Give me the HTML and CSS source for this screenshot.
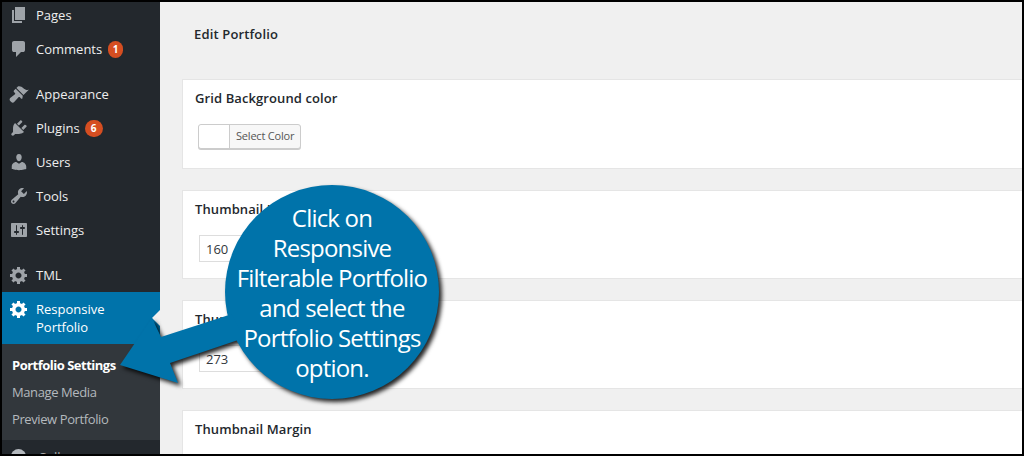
FILE: index.html
```html
<!DOCTYPE html>
<html lang="en">
<head>
<meta charset="utf-8">
<title>Edit Portfolio</title>
<link rel="stylesheet" href="styles.css">
</head>
<body>
<div class="frame">
  <nav class="sidebar">
    <ul class="menu first">
      <li class="item"><svg class="ico" viewBox="0 0 20 20"><path d="M6 15V2h10v13H6zm-1 1h8v2H3V5h2v11z"/></svg><span>Pages</span></li>
      <li class="item"><svg class="ico" viewBox="0 0 20 20"><path d="M5 2h9q.82 0 1.41.59T16 4v7q0 .82-.59 1.41T14 13h-2l-5 5v-5H5q-.82 0-1.41-.59T3 11V4q0-.82.59-1.41T5 2z"/></svg><span>Comments</span><b class="badge">1</b></li>
    </ul>
    <ul class="menu">
      <li class="item"><svg class="ico" viewBox="0 0 20 20"><path d="M14.48 11.06L7.41 3.99l1.5-1.5c.5-.56 2.3-.47 3.51.32 1.21.8 1.43 1.28 2.91 2.1 1.18.64 2.45 1.26 4.45.85zm-.71.71L6.7 4.7 4.93 6.47c-.39.39-.39 1.02 0 1.41l1.06 1.06c.39.39.39 1.03 0 1.42L1.2 14.1c-.8.8-.8 2.1 0 2.9l1.1 1.1c.8.8 2.1.8 2.9 0l4.3-4.75c.39-.39 1.02-.39 1.41 0l1.06 1.06c.39.39 1.02.39 1.41 0z"/></svg><span>Appearance</span></li>
      <li class="item"><svg class="ico" viewBox="0 0 20 20"><path d="M13.11 4.36L9.87 7.6 8 5.73l3.24-3.24c.35-.34 1.05-.2 1.56.32.52.51.66 1.21.31 1.55zm-8 1.77l.91-1.12 9.01 9.01-1.19.84c-.71.71-2.63 1.16-3.82 1.16H6.14L4.9 17.26c-.59.59-1.54.59-2.12 0-.59-.58-.59-1.53 0-2.12l1.24-1.24v-3.88c0-1.13.4-3.19 1.09-3.89zm7.26 3.97l3.24-3.24c.34-.35 1.04-.21 1.55.31.52.51.66 1.21.31 1.55l-3.24 3.25z"/></svg><span>Plugins</span><b class="badge wide">6</b></li>
      <li class="item"><svg class="ico" viewBox="0 0 20 20"><path d="M10 9.25c-2.27 0-2.73-3.44-2.73-3.44C7 4.02 7.82 2 9.97 2c2.16 0 2.98 2.02 2.71 3.81 0 0-.41 3.44-2.68 3.44zm0 2.57L12.72 10c2.39 0 4.52 2.33 4.52 4.53v2.49s-3.65 1.13-7.24 1.13c-3.65 0-7.24-1.13-7.24-1.13v-2.49c0-2.25 1.94-4.48 4.47-4.48z"/></svg><span>Users</span></li>
      <li class="item"><svg class="ico" viewBox="0 0 20 20"><path d="M16.68 9.77c-1.34 1.34-3.3 1.67-4.95.99l-5.41 6.52c-.99.99-2.59.99-3.58 0s-.99-2.59 0-3.57l6.52-5.42c-.68-1.65-.35-3.61.99-4.95 1.28-1.28 3.12-1.62 4.72-1.06l-2.89 2.89 2.82 2.82 2.86-2.87c.53 1.58.18 3.39-1.08 4.65zM3.81 16.21c.4.39 1.04.39 1.43 0 .4-.4.4-1.04 0-1.43-.39-.4-1.03-.4-1.43 0-.39.39-.39 1.03 0 1.43z"/></svg><span>Tools</span></li>
      <li class="item"><svg class="ico" viewBox="0 0 20 20"><path d="M18 16V4c0-.55-.45-1-1-1H3c-.55 0-1 .45-1 1v12c0 .55.45 1 1 1h14c.55 0 1-.45 1-1zM8 11h1c.55 0 1 .45 1 1s-.45 1-1 1H8v1.5c0 .28-.22.5-.5.5s-.5-.22-.5-.5V13H6c-.55 0-1-.45-1-1s.45-1 1-1h1V5.5c0-.28.22-.5.5-.5s.5.22.5.5V11zm5-2h-1c-.55 0-1-.45-1-1s.45-1 1-1h1V5.5c0-.28.22-.5.5-.5s.5.22.5.5V7h1c.55 0 1 .45 1 1s-.45 1-1 1h-1v5.5c0 .28-.22.5-.5.5s-.5-.22-.5-.5V9z"/></svg><span>Settings</span></li>
    </ul>
    <ul class="menu">
      <li class="item"><svg class="ico" viewBox="0 0 20 20"><path d="M18 12h-2.18c-.17.7-.44 1.35-.81 1.93l1.54 1.54-2.1 2.1-1.54-1.54c-.58.36-1.23.63-1.91.79V19H8v-2.18c-.68-.16-1.33-.43-1.91-.79l-1.54 1.54-2.12-2.12 1.54-1.54c-.36-.58-.63-1.23-.79-1.91H1V9.03h2.17c.16-.7.44-1.35.8-1.94L2.43 5.55l2.1-2.1 1.54 1.54c.58-.37 1.24-.64 1.93-.81V2h3v2.18c.68.16 1.33.43 1.91.79l1.54-1.54 2.12 2.12-1.54 1.54c.36.59.64 1.24.8 1.94H18V12zm-8.5 1.5c1.66 0 3-1.34 3-3s-1.34-3-3-3-3 1.34-3 3 1.34 3 3 3z"/></svg><span>TML</span></li>
      <li class="item current"><svg class="ico" viewBox="0 0 20 20"><path d="M18 12h-2.18c-.17.7-.44 1.35-.81 1.93l1.54 1.54-2.1 2.1-1.54-1.54c-.58.36-1.23.63-1.91.79V19H8v-2.18c-.68-.16-1.33-.43-1.91-.79l-1.54 1.54-2.12-2.12 1.54-1.54c-.36-.58-.63-1.23-.79-1.91H1V9.03h2.17c.16-.7.44-1.35.8-1.94L2.43 5.55l2.1-2.1 1.54 1.54c.58-.37 1.24-.64 1.93-.81V2h3v2.18c.68.16 1.33.43 1.91.79l1.54-1.54 2.12 2.12-1.54 1.54c.36.59.64 1.24.8 1.94H18V12zm-8.5 1.5c1.66 0 3-1.34 3-3s-1.34-3-3-3-3 1.34-3 3 1.34 3 3 3z"/></svg><span>Responsive<br>Portfolio</span></li>
    </ul>
    <ul class="submenu">
      <li class="subitem active">Portfolio Settings</li>
      <li class="subitem">Manage Media</li>
      <li class="subitem">Preview Portfolio</li>
    </ul>
    <div class="item collapse"><i class="collapse-dot"></i><span>Collapse</span></div>
  </nav>
  <main class="content">
    <h1 class="page-title">Edit Portfolio</h1>
    <section class="card card-tall">
      <h2 class="card-title">Grid Background color</h2>
      <div class="picker"><i class="swatch"></i><span class="picker-label">Select Color</span></div>
    </section>
    <section class="card">
      <h2 class="card-title">Thumbnail Height</h2>
      <input class="field" type="text" value="160" readonly>
    </section>
    <section class="card">
      <h2 class="card-title">Thumbnail Width</h2>
      <input class="field" type="text" value="273" readonly>
    </section>
    <section class="card">
      <h2 class="card-title">Thumbnail Margin</h2>
    </section>
  </main>
  <svg class="callout-shape" viewBox="2 2 1020 452">
    <g class="callout-fill">
      <circle cx="332" cy="292" r="107"/>
      <polygon points="120,365 152,318 161,337 232,314 244,338 170,363 178,383"/>
    </g>
  </svg>
  <p class="callout-text">Click on<br>Responsive<br>Filterable Portfolio<br>and select the<br>Portfolio Settings<br>option.</p>
</div>
</body>
</html>
```
FILE: styles.css
```css
* { box-sizing: border-box; }
html, body { margin: 0; padding: 0; background: #000; }
.frame {
  position: relative;
  display: flex;
  width: 1024px;
  height: 456px;
  border: 2px solid #000;
  overflow: hidden;
  font-family: "Open Sans", "Liberation Sans", sans-serif;
  font-size: 13px;
}
.sidebar { flex: none; width: 158px; background: #23282d; color: #eee; }
.menu { list-style: none; margin: 0 0 11px; padding: 0; }
.menu:nth-child(3) { margin-bottom: 0; }
.menu.first { margin-top: -4px; }
.item {
  position: relative;
  display: flex;
  align-items: center;
  height: 34px;
  padding-left: 7px;
  line-height: 18px;
}
.ico { flex: none; width: 20px; height: 20px; margin-right: 7px; fill: #9ea3a8; }
.badge {
  display: block;
  width: 15px;
  height: 17px;
  margin-left: 6px;
  border-radius: 9px;
  background: #d54e21;
  color: #fff;
  font-size: 10px;
  font-weight: 700;
  line-height: 17px;
  text-align: center;
}
.badge.wide { width: 18px; margin-left: 5px; }
.current { height: 52px; align-items: flex-start; padding-top: 8px; background: #0073aa; color: #fff; }
.current .ico { fill: #fff; margin-top: -1px; }
.current::after {
  content: "";
  position: absolute;
  right: 0;
  top: 18px;
  border: 8px solid transparent;
  border-right-color: #f1f1f1;
}
.submenu {
  list-style: none;
  margin: 0;
  padding: 8px 0 7px 10px;
  background: #32373c;
  color: #b4b9be;
  letter-spacing: -0.4px;
}
.subitem { height: 27px; line-height: 27px; }
.subitem.active { color: #fff; font-weight: 700; letter-spacing: -0.5px; }
.collapse { align-items: flex-start; padding-top: 8px; color: #aaa; }
.collapse-dot {
  flex: none;
  width: 15px;
  height: 15px;
  margin: 1px 12px 0 2px;
  border-radius: 50%;
  background: #b4b9be;
}
.content { flex: 1; min-width: 0; padding-left: 22px; background: #f0f0f0; color: #23282d; }
.page-title {
  height: 77px;
  margin: 0;
  padding: 23px 0 0 12px;
  font-size: 13px;
  font-weight: 600;
  letter-spacing: 0.15px;
  line-height: 18px;
}
.card {
  height: 89px;
  margin-bottom: 21px;
  padding: 9px 0 0 12px;
  background: #fff;
  border: 1px solid #e5e5e5;
  border-right: 0;
}
.card-tall { height: 90px; }
.card-title { margin: 0 0 17px; font-size: 13px; font-weight: 600; letter-spacing: 0.1px; line-height: 18px; }
.picker {
  display: flex;
  width: 103px;
  height: 25px;
  margin-left: 3px;
  background: #f7f7f7;
  border: 1px solid #ccc;
  border-radius: 3px;
  box-shadow: 0 1px 0 #ccc;
  font-size: 11px;
  letter-spacing: -0.2px;
  line-height: 22px;
  color: #555;
}
.swatch { flex: none; width: 31px; background: #fff; border-right: 1px solid #ccc; border-radius: 3px 0 0 3px; }
.picker-label { padding-left: 6px; }
.field {
  display: block;
  width: 90px;
  height: 27px;
  margin: 1px 0 0 4px;
  padding: 0 6px;
  background: #fff;
  border: 1px solid #ddd;
  color: #32373c;
  font: 13px "Open Sans", "Liberation Sans", sans-serif;
  outline: 0;
}
.callout-shape {
  position: absolute;
  left: 0;
  top: 0;
  width: 1020px;
  height: 452px;
  pointer-events: none;
}
.callout-fill { fill: #0073aa; filter: drop-shadow(3px 3px 2px rgba(0, 0, 0, .85)); }
.callout-text {
  position: absolute;
  left: 215px;
  top: 201px;
  width: 230px;
  margin: 0;
  color: #fff;
  font-size: 24px;
  letter-spacing: -0.8px;
  line-height: 30px;
  text-align: center;
}
```
